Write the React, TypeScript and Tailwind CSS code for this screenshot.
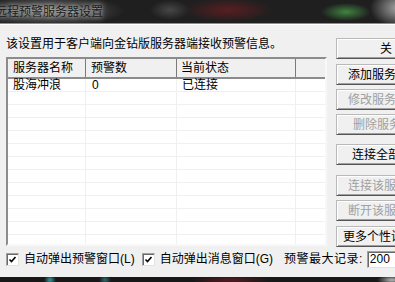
import React from "react";

const FONT = "[font-family:'Liberation_Sans','Noto_Sans_CJK_SC',sans-serif]";

function Btn({ label, pl, disabled, mt }: { label: string; pl: number; disabled?: boolean; mt: string }) {
  return (
    <div
      className={`${mt} h-[21px] w-[84px] shrink-0 flex items-center bg-[#f0f0f0] border border-t-[#b9b9b9] border-l-[#b9b9b9] border-r-[#696969] border-b-[#555555] shadow-[inset_1px_1px_0_#ffffff,inset_-1px_-1px_0_#a0a0a0] text-[12px] leading-[14px] whitespace-nowrap ${
        disabled ? "text-[#a0a0a0]" : "text-black"
      }`}
      style={{ paddingLeft: pl - 1 }}
    >
      {label}
    </div>
  );
}

function Check({ label }: { label: string }) {
  return (
    <div className="flex items-center">
      <div className="w-[13px] h-[13px] bg-white border border-t-[#a0a0a0] border-l-[#a0a0a0] border-r-[#e3e3e3] border-b-[#e3e3e3] shadow-[inset_1px_1px_0_#696969] flex items-center justify-center">
        <svg width="9" height="9" viewBox="0 0 9 9">
          <path d="M1.5 4.5 L3.5 6.5 L7.5 2" stroke="#000" strokeWidth="1.6" fill="none" />
        </svg>
      </div>
      <span className="ml-[5px] whitespace-nowrap">{label}</span>
    </div>
  );
}

export default function App() {
  const rows = Array.from({ length: 13 });
  return (
    <div className={`w-[395px] h-[282px] overflow-hidden flex flex-col ${FONT} text-[12px] leading-[14px] text-black`}>
      {/* title bar */}
      <div className="h-[23px] shrink-0 flex items-center overflow-hidden [background:radial-gradient(ellipse_75px_16px_at_50px_11px,rgba(160,160,160,0.55),transparent),radial-gradient(ellipse_20px_10px_at_170px_10px,rgba(110,110,110,0.5),transparent),radial-gradient(ellipse_45px_12px_at_228px_10px,rgba(120,30,35,0.65),transparent),radial-gradient(ellipse_25px_9px_at_346px_12px,rgba(70,150,70,0.85),transparent),radial-gradient(ellipse_30px_20px_at_400px_8px,rgba(190,190,190,0.9),transparent),#1f1f1f]">
        <span className="ml-[-5px] text-[12px] text-[#1a1a1a] whitespace-nowrap [text-shadow:0_0_4px_rgba(255,255,255,0.7),0_0_8px_rgba(255,255,255,0.5)]">
          远程预警服务器设置
        </span>
      </div>
      <div className="h-[1px] shrink-0 bg-[#8c8c8c]" />
      <div className="h-[1px] shrink-0 bg-[#ffffff]" />
      {/* body */}
      <div className="flex-1 bg-[#f0f0f0] flex flex-col min-h-0">
        <div className="h-[222px] flex flex-row shrink-0">
          <div className="w-[321px] ml-[6px] shrink-0 flex flex-col">
            <div className="pt-[12px] h-[26px] whitespace-nowrap">该设置用于客户端向金钻版服务器端接收预警信息。</div>
            <div className="mt-[6px] h-[189px] bg-white border-2 border-t-[#8c8c8c] border-l-[#8c8c8c] border-r-[#f8f8f8] border-b-[#f8f8f8] overflow-hidden flex flex-col">
              <div className="h-[20px] shrink-0 flex bg-[#f0f0f0] border-b-2 border-b-[#8c8c8c]">
                <div className="w-[78px] shrink-0 pl-[5px] flex items-center border-r border-r-[#7a7a7a]">服务器名称</div>
                <div className="w-[91px] shrink-0 pl-[5px] flex items-center border-r border-r-[#7a7a7a]">预警数</div>
                <div className="w-[119px] shrink-0 pl-[4px] flex items-center border-r border-r-[#7a7a7a]">当前状态</div>
                <div className="flex-1" />
              </div>
              {rows.map((_, i) => (
                <div key={i} className="h-[13px] shrink-0 flex border-b border-b-[#f0f0f0] leading-[12px]">
                  <div className="w-[78px] shrink-0 pl-[5px] border-r border-r-[#f0f0f0] flex items-center">{i === 0 ? "股海冲浪" : ""}</div>
                  <div className="w-[91px] shrink-0 pl-[6px] border-r border-r-[#f0f0f0] flex items-center">{i === 0 ? "0" : ""}</div>
                  <div className="w-[119px] shrink-0 pl-[5px] border-r border-r-[#f0f0f0] flex items-center">{i === 0 ? "已连接" : ""}</div>
                  <div className="flex-1" />
                </div>
              ))}
            </div>
          </div>
          <div className="ml-[9px] flex flex-col">
            <Btn label="关 闭" pl={44} mt="mt-[13px]" />
            <Btn label="添加服务器" pl={12} mt="mt-[5px]" />
            <Btn label="修改服务器" pl={12} mt="mt-[4px]" disabled />
            <Btn label="删除服务器" pl={17} mt="mt-[4px]" disabled />
            <Btn label="连接全部" pl={16} mt="mt-[9px]" />
            <Btn label="连接该服务器" pl={12} mt="mt-[10px]" disabled />
            <Btn label="断开该服务器" pl={12} mt="mt-[4px]" disabled />
            <Btn label="更多个性设置" pl={7} mt="mt-[5px]" />
          </div>
        </div>
        <div className="h-[24px] shrink-0 flex items-center pl-[6px]">
          <Check label="自动弹出预警窗口(L)" />
          <div className="ml-[7px]">
            <Check label="自动弹出消息窗口(G)" />
          </div>
          <span className="ml-[11px] whitespace-nowrap tracking-[0.5px]">预警最大记录:</span>
          <div className="ml-[4px] h-[17px] w-[40px] shrink-0 bg-white border border-t-[#a0a0a0] border-l-[#a0a0a0] border-r-[#e3e3e3] border-b-[#e3e3e3] shadow-[inset_1px_1px_0_#696969] pl-[2px] flex items-center">
            200
          </div>
        </div>
      </div>
      {/* bottom desktop strip */}
      <div className="h-[5px] shrink-0 [background:radial-gradient(ellipse_6px_5px_at_50px_3px,rgba(60,170,180,0.9),transparent),radial-gradient(ellipse_6px_5px_at_105px_3px,rgba(60,140,150,0.7),transparent),radial-gradient(ellipse_40px_5px_at_230px_3px,rgba(110,30,40,0.7),transparent),radial-gradient(ellipse_15px_5px_at_392px_3px,rgba(200,200,200,0.9),transparent),#181818]" />
    </div>
  );
}
